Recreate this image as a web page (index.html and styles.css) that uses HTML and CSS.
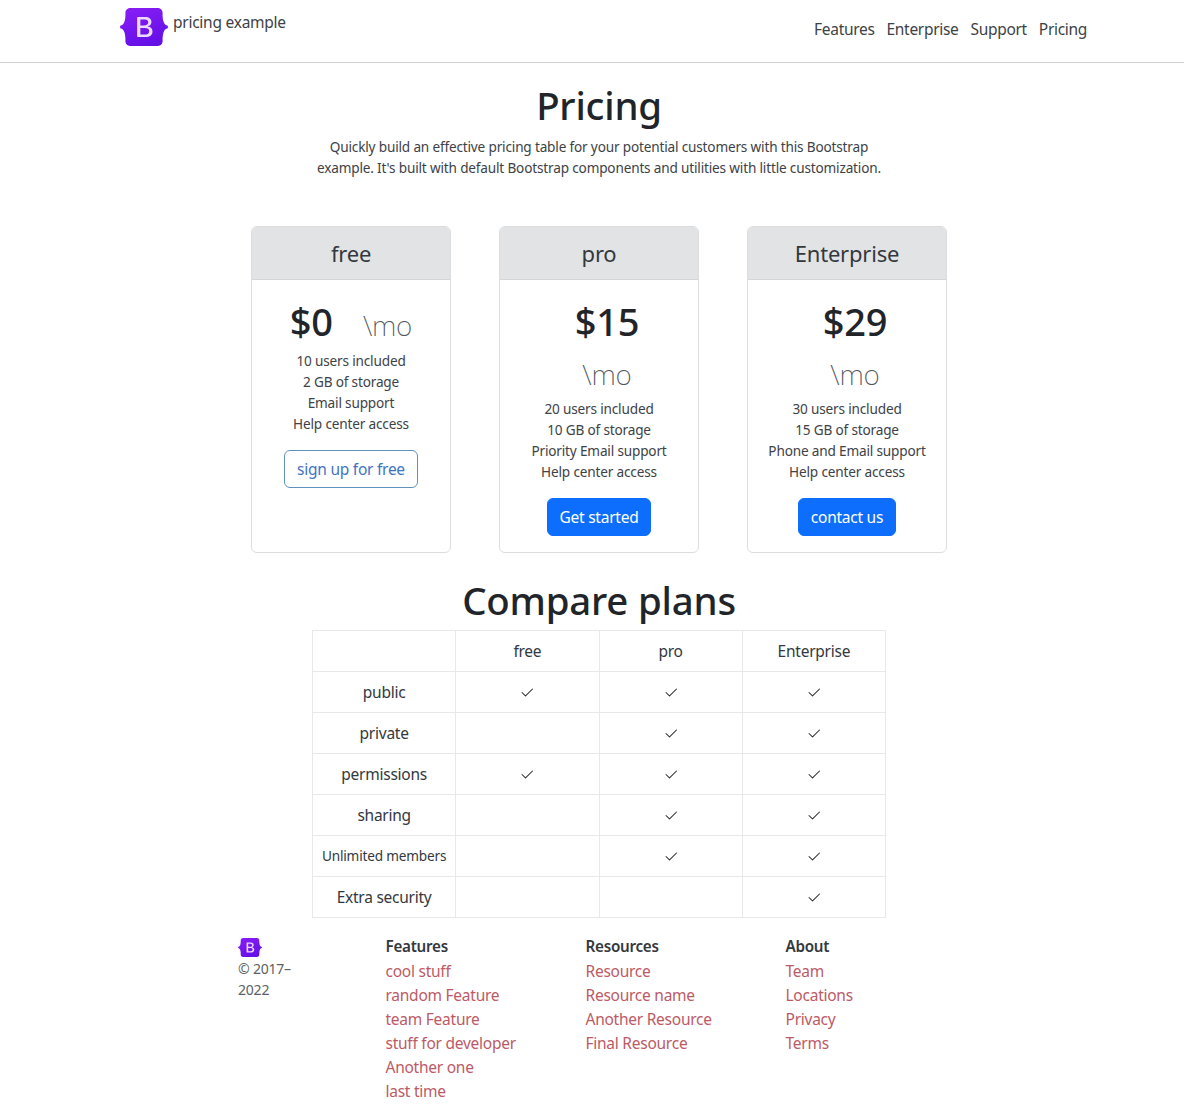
FILE: index.html
```html
<!DOCTYPE html>
<html lang="en">
<head>
<meta charset="utf-8">
<title>Pricing example</title>
<link rel="stylesheet" href="styles.css">
</head>
<body>
<svg class="defs" width="0" height="0" aria-hidden="true">
  <defs>
    <linearGradient id="bs-grad" x1="0" y1="0" x2="0.4" y2="1">
      <stop offset="0" stop-color="#8a1ef6"/>
      <stop offset="1" stop-color="#6610e8"/>
    </linearGradient>
    <symbol id="logo" viewBox="0 0 118 94">
      <rect x="38" y="18" width="46" height="58" fill="#ecd9fd"/>
      <path fill="url(#bs-grad)" fill-rule="evenodd" d="M24.509 0c-6.733 0-11.715 5.893-11.492 12.284.214 6.14-.064 14.092-2.066 20.577C8.943 39.365 5.547 43.485 0 44.014v5.972c5.547.529 8.943 4.649 10.951 11.153 2.002 6.485 2.28 14.437 2.066 20.577C12.794 88.106 17.776 94 24.51 94H93.5c6.733 0 11.714-5.893 11.491-12.284-.214-6.14.064-14.092 2.066-20.577 2.009-6.504 5.396-10.624 10.943-11.153v-5.972c-5.547-.529-8.934-4.649-10.943-11.153-2.002-6.484-2.28-14.437-2.066-20.577C105.214 5.894 100.233 0 93.5 0H24.508zM80 57.863C80 66.663 73.436 72 62.543 72H44a2 2 0 01-2-2V24a2 2 0 012-2h18.437c9.083 0 15.044 4.92 15.044 12.474 0 5.302-4.01 10.049-9.119 10.88v.277C75.317 46.394 80 51.21 80 57.863zM60.521 28.34H49.948v14.934h8.905c6.884 0 10.68-2.772 10.68-7.727 0-4.643-3.264-7.207-8.012-7.207zM49.948 49.2v16.458H60.91c7.167 0 10.964-2.876 10.964-8.281 0-5.406-3.903-8.178-11.07-8.178H49.948z"/>
    </symbol>
    <symbol id="check" viewBox="0 0 16 16">
      <path fill="#212529" d="M13.854 3.646a.5.5 0 0 1 0 .708l-7 7a.5.5 0 0 1-.708 0l-3.5-3.5a.5.5 0 1 1 .708-.708L6.5 10.293l6.646-6.647a.5.5 0 0 1 .708 0z"/>
    </symbol>
  </defs>
</svg>

<header class="site-header">
  <a class="brand" href="#">
    <svg class="brand-logo"><use href="#logo"/></svg>
    <span class="brand-name">pricing example</span>
  </a>
  <nav class="site-nav">
    <a href="#">Features</a>
    <a href="#">Enterprise</a>
    <a href="#">Support</a>
    <a href="#">Pricing</a>
  </nav>
</header>

<main class="content">
  <section class="hero">
    <h1 class="hero-title">Pricing</h1>
    <p class="hero-lead">Quickly build an effective pricing table for your potential customers with this Bootstrap example. It's built with default Bootstrap components and utilities with little customization.</p>
  </section>

  <section class="plans">
    <article class="plan">
      <h2 class="plan-name">free</h2>
      <div class="plan-body">
        <div class="plan-price plan-price-inline"><span class="amount">$0</span><span class="per">\mo</span></div>
        <ul class="plan-features">
          <li>10 users included</li>
          <li>2 GB of storage</li>
          <li>Email support</li>
          <li>Help center access</li>
        </ul>
        <a class="btn btn-outline" href="#">sign up for free</a>
      </div>
    </article>
    <article class="plan">
      <h2 class="plan-name">pro</h2>
      <div class="plan-body">
        <div class="plan-price"><span class="amount">$15</span><span class="per">\mo</span></div>
        <ul class="plan-features">
          <li>20 users included</li>
          <li>10 GB of storage</li>
          <li>Priority Email support</li>
          <li>Help center access</li>
        </ul>
        <a class="btn btn-solid" href="#">Get started</a>
      </div>
    </article>
    <article class="plan">
      <h2 class="plan-name">Enterprise</h2>
      <div class="plan-body">
        <div class="plan-price"><span class="amount">$29</span><span class="per">\mo</span></div>
        <ul class="plan-features">
          <li>30 users included</li>
          <li>15 GB of storage</li>
          <li>Phone and Email support</li>
          <li>Help center access</li>
        </ul>
        <a class="btn btn-solid" href="#">contact us</a>
      </div>
    </article>
  </section>

  <h2 class="compare-title">Compare plans</h2>
  <table class="compare">
    <thead>
      <tr><th></th><th>free</th><th>pro</th><th>Enterprise</th></tr>
    </thead>
    <tbody>
      <tr><th>public</th><td><svg class="check"><use href="#check"/></svg></td><td><svg class="check"><use href="#check"/></svg></td><td><svg class="check"><use href="#check"/></svg></td></tr>
      <tr><th>private</th><td></td><td><svg class="check"><use href="#check"/></svg></td><td><svg class="check"><use href="#check"/></svg></td></tr>
      <tr><th>permissions</th><td><svg class="check"><use href="#check"/></svg></td><td><svg class="check"><use href="#check"/></svg></td><td><svg class="check"><use href="#check"/></svg></td></tr>
      <tr><th>sharing</th><td></td><td><svg class="check"><use href="#check"/></svg></td><td><svg class="check"><use href="#check"/></svg></td></tr>
      <tr><th class="small-head">Unlimited members</th><td></td><td><svg class="check"><use href="#check"/></svg></td><td><svg class="check"><use href="#check"/></svg></td></tr>
      <tr><th>Extra security</th><td></td><td></td><td><svg class="check"><use href="#check"/></svg></td></tr>
    </tbody>
  </table>

  <footer class="site-footer">
    <div class="foot-brand">
      <svg class="foot-logo"><use href="#logo"/></svg>
      <small class="copyright">© 2017–2022</small>
    </div>
    <div class="foot-col">
      <h5>Features</h5>
      <a href="#">cool stuff</a>
      <a href="#">random Feature</a>
      <a href="#">team Feature</a>
      <a href="#">stuff for developer</a>
      <a href="#">Another one</a>
      <a href="#">last time</a>
    </div>
    <div class="foot-col">
      <h5>Resources</h5>
      <a href="#">Resource</a>
      <a href="#">Resource name</a>
      <a href="#">Another Resource</a>
      <a href="#">Final Resource</a>
    </div>
    <div class="foot-col">
      <h5>About</h5>
      <a href="#">Team</a>
      <a href="#">Locations</a>
      <a href="#">Privacy</a>
      <a href="#">Terms</a>
    </div>
  </footer>
</main>
</body>
</html>
```

FILE: styles.css
```css
* { box-sizing: border-box; }
html, body { margin: 0; padding: 0; }
body {
  font-family: "Noto Sans", "Open Sans", sans-serif;
  font-size: 15.5px;
  line-height: 24px;
  color: #212529;
  background: #fff;
  letter-spacing: -0.25px;
}
a { text-decoration: none; }
.defs { position: absolute; }

.site-header {
  height: 63px;
  border-bottom: 1px solid #ced0d2;
  padding: 8px 97px 0 120px;
  display: flex;
  justify-content: space-between;
}
.brand { display: flex; align-items: flex-start; color: #3d4246; }
.brand-logo { width: 48px; height: 38px; display: block; }
.brand-name { margin: 2px 0 0 5px; }
.site-nav { display: flex; gap: 12px; padding-top: 9px; letter-spacing: -0.31px; }
.site-nav a { color: #3d4246; }

.content { width: 746px; margin-left: 226px; }

.hero { width: 574px; margin: 0 auto; text-align: center; padding-top: 18px; }
.hero-title { font-size: 38.4px; line-height: 48px; font-weight: 500; margin: 0 0 7px; letter-spacing: -0.2px; }
.hero-lead { font-size: 13.6px; line-height: 21px; margin: 0; color: #3d4246; letter-spacing: -0.17px; }

.plans {
  display: grid;
  grid-template-columns: repeat(3, 199.5px);
  justify-content: center;
  gap: 48.5px;
  margin-top: 48px;
}
.plan {
  border: 1px solid #dcdddf;
  border-radius: 6px;
  overflow: hidden;
  text-align: center;
}
.plan-name {
  margin: 0;
  height: 53px;
  background: #e2e3e5;
  border-bottom: 1px solid #d3d5d7;
  font-size: 22px;
  line-height: 52px;
  font-weight: 400;
  color: #33383d;
  letter-spacing: -0.2px;
}
.plan-body { padding: 16px; }
.plan-price { height: 102px; }
.plan-price-inline { height: 54px; display: flex; justify-content: center; gap: 30px; }
.amount { display: block; font-size: 38px; line-height: 48px; font-weight: 500; padding-left: 16px; padding-top: 1px; letter-spacing: -0.2px; }
.per { display: block; font-size: 28px; line-height: 48px; font-weight: 200; color: #50575e; padding-left: 16px; padding-top: 5px; letter-spacing: -0.2px; }
.plan-price-inline .amount { padding-left: 0; }
.plan-price-inline .per { padding-left: 0; }
.plan-features { list-style: none; margin: 0 0 16px; padding: 0; font-size: 13.6px; line-height: 21px; color: #3d4246; letter-spacing: -0.17px; }
.btn {
  display: inline-block;
  height: 38px;
  line-height: 36px;
  padding: 0 12px;
  border: 1px solid #0d6efd;
  border-radius: 6px;
}
.btn-outline { color: #3f74c4; border-color: #5f93bf; }
.btn-solid { background: #0d6efd; color: #fff; }

.compare-title { text-align: center; font-size: 38.4px; line-height: 48px; font-weight: 500; margin: 23px 0 6px; letter-spacing: -0.2px; }
.compare {
  width: 574px;
  margin: 0 auto;
  border-collapse: collapse;
  table-layout: fixed;
}
.compare th, .compare td {
  border: 1px solid #e6e8ea;
  height: 41px;
  padding: 0;
  text-align: center;
  vertical-align: middle;
  font-weight: 400;
  color: #33383d;
}
.compare .small-head { font-size: 13.6px; letter-spacing: -0.17px; }
.check { width: 16px; height: 16px; display: block; margin: 2px auto 0; }

.site-footer {
  display: grid;
  grid-template-columns: 147.5px 200px 200px 200px;
  padding: 19px 0 0 12px;
}
.foot-logo { width: 24px; height: 19px; display: block; margin-top: 1px; }
.copyright { display: block; width: 60px; font-size: 14px; line-height: 21px; color: #5a5f64; margin-top: 1px; letter-spacing: -0.2px; }
.foot-col { display: flex; flex-direction: column; align-items: flex-start; }
.foot-col h5 { margin: 0; font-size: 15.2px; line-height: 19px; font-weight: 600; color: #33383d; padding-bottom: 3px; }
.foot-col a { color: #bc5a66; height: 24px; }
```
